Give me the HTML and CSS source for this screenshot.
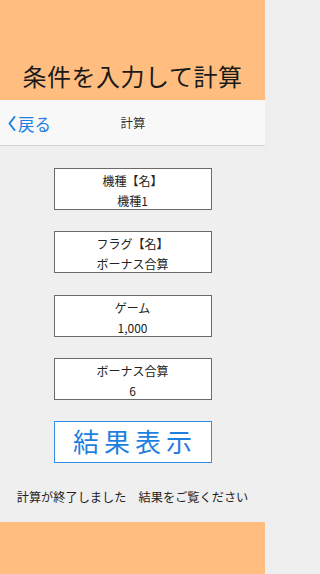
FILE: index.html
```html
<!DOCTYPE html>
<html lang="ja">
<head>
<meta charset="utf-8">
<link rel="stylesheet" href="styles.css">
</head>
<body>
<div class="screen">
  <header class="top">
    <h1 class="title">条件を入力して計算</h1>
  </header>
  <nav class="navbar">
    <a class="back">
      <svg class="chev" width="8" height="15" viewBox="0 0 8 15"><path d="M6.5 1 L1.5 7.5 L6.5 14" fill="none" stroke="#1f7fe3" stroke-width="2" stroke-linecap="round" stroke-linejoin="round"/></svg>
      <span>戻る</span>
    </a>
    <div class="navtitle">計算</div>
  </nav>
  <main class="content">
    <div class="field"><div>機種【名】</div><div>機種1</div></div>
    <div class="field"><div>フラグ【名】</div><div>ボーナス合算</div></div>
    <div class="field"><div>ゲーム</div><div>1,000</div></div>
    <div class="field"><div>ボーナス合算</div><div>6</div></div>
    <div class="button">結果表示</div>
    <p class="message">計算が終了しました　結果をご覧ください</p>
  </main>
  <footer class="bottom"></footer>
</div>
</body>
</html>
```

FILE: styles.css
```css
* { box-sizing: border-box; }
html, body { margin: 0; padding: 0; }
body {
  font-family: "Noto Sans CJK JP", "Noto Sans", sans-serif;
  background: #efefef;
}
.screen {
  width: 265px;
  height: 574px;
  display: flex;
  flex-direction: column;
}
.top {
  height: 100px;
  background: #ffbe80;
  display: flex;
  align-items: flex-end;
  justify-content: center;
  padding-bottom: 12px;
}
.title {
  margin: 0;
  font-size: 24px;
  font-weight: 400;
  line-height: 24px;
  color: #1a1a1a;
  letter-spacing: 0.5px;
}
.navbar {
  height: 46px;
  background: #f8f8f8;
  border-bottom: 1px solid #d2d2d2;
  position: relative;
  display: flex;
  align-items: center;
}
.back {
  display: flex;
  align-items: center;
  gap: 2px;
  padding-left: 8px;
  color: #1f7fe3;
  font-size: 16.5px;
  line-height: 20px;
  padding-top: 2px;
}
.chev { display: block; }
.navtitle {
  position: absolute;
  left: 0;
  right: 0;
  top: 0;
  bottom: 0;
  display: flex;
  align-items: center;
  justify-content: center;
  font-size: 12.5px;
  color: #333;
  padding-left: 1px;
  pointer-events: none;
}
.content {
  flex: 1;
  background: #efefef;
  display: flex;
  flex-direction: column;
  align-items: center;
  padding-top: 22px;
  gap: 21.25px;
}
.field {
  width: 158px;
  height: 42px;
  background: #fff;
  border: 1px solid #6a6a6a;
  padding-top: 2px;
  font-size: 12px;
  line-height: 20px;
  color: #222;
  text-align: center;
}
.button {
  width: 158px;
  height: 42px;
  border: 1.5px solid #2f8cec;
  background: #fff;
  color: #1f7fe0;
  font-size: 26px;
  line-height: 38px;
  letter-spacing: 5px;
  text-indent: 5px;
  text-align: center;
}
.message {
  margin: 5px 0 0;
  font-size: 12.2px;
  line-height: 16px;
  color: #222;
  white-space: nowrap;
}
.bottom {
  height: 52px;
  background: #ffbe80;
}
```
